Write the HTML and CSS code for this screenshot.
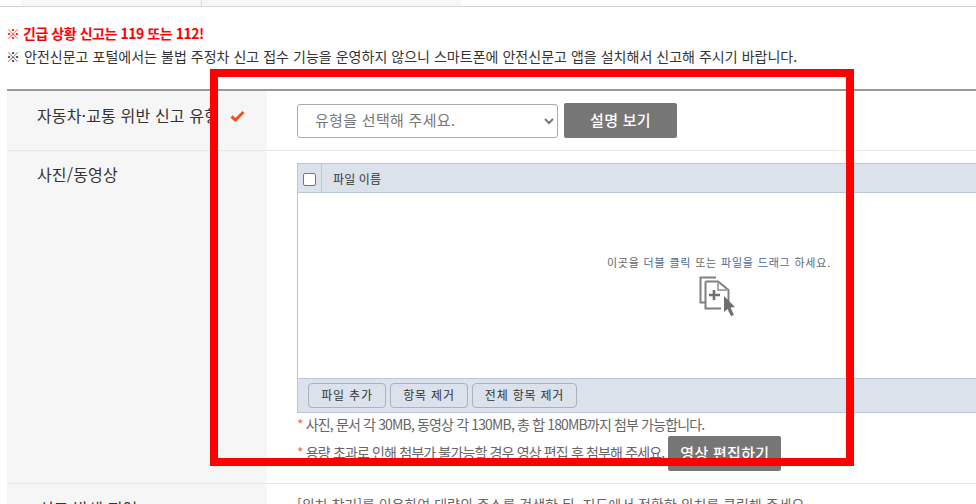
FILE: index.html
```html
<!DOCTYPE html>
<html lang="ko">
<head>
<meta charset="utf-8">
<title>안전신문고 신고</title>
<link rel="stylesheet" href="styles.css">
</head>
<body>
<div class="page">
  <div class="tabs"><div class="tab tab-first"></div><div class="tab tab-second"></div></div>
  <div class="notice">
    <p class="urgent">※ 긴급 상황 신고는 119 또는 112!</p>
    <p class="info">※ 안전신문고 포털에서는 불법 주정차 신고 접수 기능을 운영하지 않으니 스마트폰에 안전신문고 앱을 설치해서 신고해 주시기 바랍니다.</p>
  </div>
  <div class="form">
    <div class="row row-type">
      <div class="label">자동차·교통 위반 신고 유형
        <svg class="check" width="15" height="12" viewBox="0 0 15 12"><path d="M1.5 6.5 5.5 10 13.5 2" fill="none" stroke="#f4511e" stroke-width="3"/></svg>
      </div>
      <div class="field field-type">
        <select class="select"><option>유형을 선택해 주세요.</option></select>
        <button class="dark-btn">설명 보기</button>
      </div>
    </div>
    <div class="row row-media">
      <div class="label">사진/동영상</div>
      <div class="field field-media">
        <div class="uploader">
          <div class="up-head">
            <div class="up-check"><span class="box"></span></div>
            <div class="up-name">파일 이름</div>
          </div>
          <div class="up-body">
            <div class="drop">
              <p class="drop-text">이곳을 <span class="blue">더블 클릭</span> 또는 <span class="blue">파일을 드래그</span> 하세요.</p>
              <svg class="drop-icon" width="38" height="40" viewBox="0 0 38 40">
                <path d="M7 26.500H1.500V1.500H17" fill="none" stroke="#808080" stroke-width="2"/>
                <path d="M6.500 5.500H19L29.500 14V30M22 32.500H6.500V5.500" fill="none" stroke="#808080" stroke-width="2"/>
                <path d="M19 6V14H29" fill="none" stroke="#a8a8a8" stroke-width="2"/>
                <path d="M15 14V24M10 19H21" fill="none" stroke="#707070" stroke-width="2.600"/>
                <path d="M25 20 36 31 31.500 31.500 35 39 32 40 28.500 33 25 36Z" fill="#6e6e6e"/>
              </svg>
            </div>
          </div>
          <div class="up-tools">
            <button class="tool-btn">파일 추가</button>
            <button class="tool-btn">항목 제거</button>
            <button class="tool-btn tool-wide">전체 항목 제거</button>
          </div>
        </div>
        <p class="note note-one"><span class="star">*</span> 사진, 문서 각 30MB, 동영상 각 130MB, 총 합 180MB까지 첨부 가능합니다.</p>
        <div class="note-line">
          <p class="note"><span class="star">*</span> 용량 초과로 인해 첨부가 불가능할 경우 영상 편집 후 첨부해 주세요.</p>
          <button class="dark-btn">영상 편집하기</button>
        </div>
      </div>
    </div>
    <div class="row row-place">
      <div class="label">신고 발생 지역</div>
      <div class="field field-place">[위치 찾기]를 이용하여 대략의 주소를 검색한 뒤, 지도에서 정확한 위치를 클릭해 주세요.</div>
    </div>
  </div>
  <div class="marker"></div>
</div>
</body>
</html>
```
FILE: styles.css
```css
* { box-sizing: border-box; }
html, body { margin: 0; padding: 0; background: #fff; }
body { font-family: "Noto Sans CJK KR", "Liberation Sans", sans-serif; color: #333; }
.page { position: relative; width: 976px; height: 504px; overflow: hidden; }
p { margin: 0; }

.tabs { display: flex; height: 7px; padding-left: 21px; border-bottom: 1px solid #d4d4d4; }
.tab { height: 6px; background: #f6f6f6; }
.tab-first { width: 181px; border-right: 1px solid #dcdcdc; }
.tab-second { width: 259px; }

.notice { padding: 15px 0 0 6px; height: 82px; }
.urgent { font-size: 14px; line-height: 23px; font-weight: 700; color: #f00; letter-spacing: -0.45px; }
.info { font-size: 14px; line-height: 23px; color: #333; letter-spacing: 0.03px; white-space: nowrap; }

.form { margin-left: 7px; border-top: 2px solid #999; }
.row { display: flex; border-bottom: 1px solid #e8e8e8; }
.row-type { height: 60px; }
.row-media { height: 333px; }
.row-place { height: 40px; border-bottom: 0; }
.label { flex: 0 0 260px; background: #f6f6f6; padding: 12px 0 0 30px; font-size: 16px; line-height: 24px; color: #333; letter-spacing: 0.15px; white-space: nowrap; }
.row-media .label { padding-top: 11px; }
.row-place .label { padding-top: 12px; padding-left: 32px; }
.check { margin-left: 6px; }
.field { flex: 1; padding-left: 30px; min-width: 0; }

.field-type { display: flex; gap: 6px; align-items: flex-start; padding-top: 12px; }
.select { width: 261px; height: 34px; margin-top: 1px; padding: 0 0 3px 13px; border: 1px solid #aaa; border-radius: 3px; background: #fff; color: #777; font: 15px "Noto Sans CJK KR", sans-serif; letter-spacing: 0.3px; }
.dark-btn { height: 35px; width: 113px; padding: 0 0 3px; border: 0; border-radius: 2px; background: #767676; color: #fff; font: 500 15px "Noto Sans CJK KR", sans-serif; letter-spacing: 0.3px; }

.field-media { padding-top: 12px; }
.uploader { width: 690px; }
.up-head { display: flex; height: 30px; background: #dbe2ec; border-top: 1px solid #bcc7d6; border-bottom: 1px solid #bcc7d6; border-left: 1px solid #bcc7d6; }
.up-check { width: 24px; border-right: 1px solid #bcc7d6; display: flex; align-items: center; padding-left: 5px; }
.box { width: 13px; height: 13px; margin-top: 2px; border: 1px solid #767676; border-radius: 2px; background: #fff; }
.up-name { padding-left: 11px; font-size: 12px; line-height: 29px; color: #333; letter-spacing: 0.1px; }
.up-body { height: 185px; border-left: 1px solid #bcc7d6; display: flex; }
.drop { margin-left: 308px; padding-top: 61px; display: flex; flex-direction: column; align-items: center; width: 226px; }
.drop-text { font-size: 11px; line-height: 17px; color: #666; letter-spacing: 0.82px; white-space: nowrap; }
.blue { color: #4a6a9c; }
.drop-icon { margin-top: 5px; margin-left: -3px; }
.up-tools { display: flex; gap: 4px; height: 35px; padding: 4px 0 0 10px; background: #dbe2ec; border: 1px solid #bcc7d6; border-right: 0; }
.tool-btn { width: 78px; height: 25px; padding: 0 0 2px; border: 1px solid #a9b3bf; border-radius: 4px; background: #dbe2ec; color: #333; font: 12px "Noto Sans CJK KR", sans-serif; letter-spacing: 0.8px; }
.tool-wide { width: 105px; }
.note { font-size: 14px; line-height: 20px; color: #666; letter-spacing: -0.85px; white-space: nowrap; }
.note-one { margin-top: 1px; }
.star { color: #f0763c; }
.note-line { display: flex; gap: 4px; align-items: center; margin-top: 2px; }
.note-line .note { margin-top: -3px; }

.field-place { padding-top: 10px; font-size: 14px; line-height: 20px; color: #666; white-space: nowrap; }
.marker { position: absolute; left: 210px; top: 69px; width: 644px; height: 397px; border: 8px solid #f00; pointer-events: none; }
```
